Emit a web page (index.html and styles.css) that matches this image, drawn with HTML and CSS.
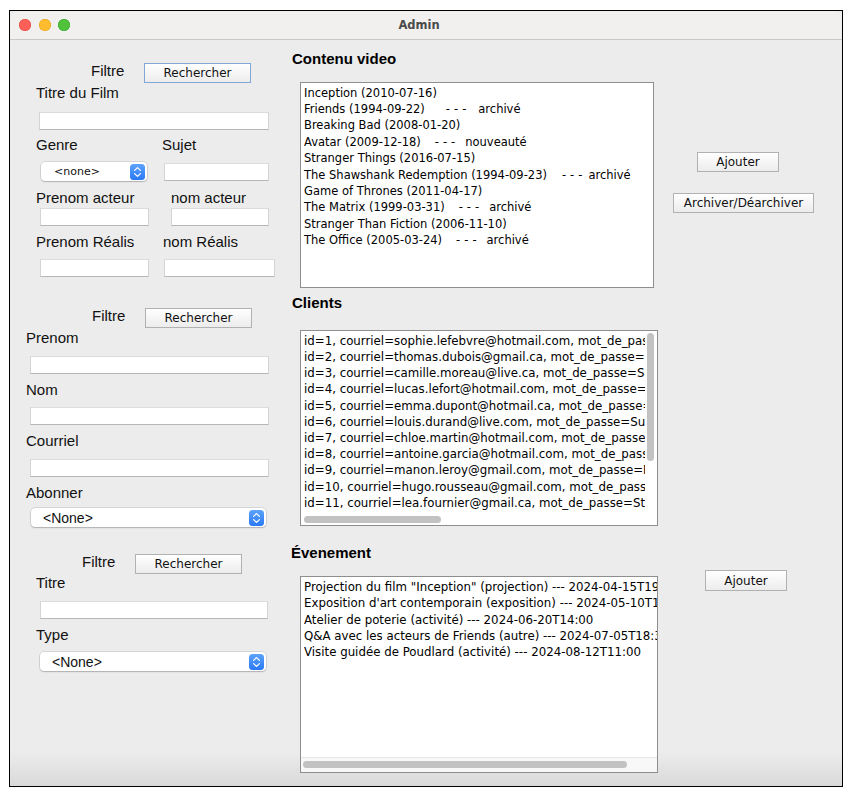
FILE: index.html
```html
<!DOCTYPE html>
<html lang="fr">
<head>
<meta charset="utf-8">
<title>Admin</title>
<link rel="stylesheet" href="styles.css">
</head>
<body>
<div class="frame">
  <div class="titlebar">
    <div class="lights">
      <span class="light red"></span>
      <span class="light yellow"></span>
      <span class="light green"></span>
    </div>
    <div class="title">Admin</div>
    <div></div>
  </div>
  <div class="content">
    <!-- LEFT COLUMN -->
    <div class="col-left">
      <!-- Panel 1 : films -->
      <div class="filter-row p1">
        <span class="filtre">Filtre</span>
        <button class="btn btn-focus btn-search">Rechercher</button>
      </div>
      <div class="label l1-titre">Titre du Film</div>
      <div class="field f1-titre"></div>
      <div class="row l1-gs">
        <span class="cell w126">Genre</span><span>Sujet</span>
      </div>
      <div class="row r1-gs">
        <div class="combo combo-small">
          <span>&lt;none&gt;</span>
          <svg class="stepper" width="15" height="16" viewBox="0 0 15 16"><defs><linearGradient id="g1" x1="0" y1="0" x2="0" y2="1"><stop offset="0" stop-color="#5ca3fb"/><stop offset="1" stop-color="#2b78f5"/></linearGradient></defs><rect x="0" y="0" width="15" height="16" rx="3.5" fill="url(#g1)"/><path d="M4.6 6.4 L7.5 3.6 L10.4 6.4" fill="none" stroke="#fff" stroke-width="1.3" stroke-linecap="round" stroke-linejoin="round"/><path d="M4.6 9.6 L7.5 12.4 L10.4 9.6" fill="none" stroke="#fff" stroke-width="1.3" stroke-linecap="round" stroke-linejoin="round"/></svg>
        </div>
        <div class="field f1-sujet"></div>
      </div>
      <div class="row l1-act">
        <span class="cell w135">Prenom acteur</span><span>nom acteur</span>
      </div>
      <div class="row r1-act">
        <div class="field f-109"></div>
        <div class="field f1-nomact"></div>
      </div>
      <div class="row l1-real">
        <span class="cell w127">Prenom Réalis</span><span>nom Réalis</span>
      </div>
      <div class="row r1-real">
        <div class="field f-109"></div>
        <div class="field f1-nomreal"></div>
      </div>

      <!-- Panel 2 : clients -->
      <div class="filter-row p2">
        <span class="filtre">Filtre</span>
        <button class="btn btn-search">Rechercher</button>
      </div>
      <div class="label l2 l2-first">Prenom</div>
      <div class="field f2 f2-a"></div>
      <div class="label l2 l2-next">Nom</div>
      <div class="field f2 f2-b"></div>
      <div class="label l2 l2-next">Courriel</div>
      <div class="field f2 f2-a"></div>
      <div class="label l2 l2-next">Abonner</div>
      <div class="combo combo-wide c2">
        <span>&lt;None&gt;</span>
        <svg class="stepper" width="15" height="16" viewBox="0 0 15 16"><defs><linearGradient id="g2" x1="0" y1="0" x2="0" y2="1"><stop offset="0" stop-color="#5ca3fb"/><stop offset="1" stop-color="#2b78f5"/></linearGradient></defs><rect x="0" y="0" width="15" height="16" rx="3.5" fill="url(#g2)"/><path d="M4.6 6.4 L7.5 3.6 L10.4 6.4" fill="none" stroke="#fff" stroke-width="1.3" stroke-linecap="round" stroke-linejoin="round"/><path d="M4.6 9.6 L7.5 12.4 L10.4 9.6" fill="none" stroke="#fff" stroke-width="1.3" stroke-linecap="round" stroke-linejoin="round"/></svg>
      </div>

      <!-- Panel 3 : evenements -->
      <div class="filter-row p3">
        <span class="filtre">Filtre</span>
        <button class="btn btn-search">Rechercher</button>
      </div>
      <div class="label l3-titre">Titre</div>
      <div class="field f3-titre"></div>
      <div class="label l3-type">Type</div>
      <div class="combo combo-wide c3">
        <span>&lt;None&gt;</span>
        <svg class="stepper" width="15" height="16" viewBox="0 0 15 16"><defs><linearGradient id="g3" x1="0" y1="0" x2="0" y2="1"><stop offset="0" stop-color="#5ca3fb"/><stop offset="1" stop-color="#2b78f5"/></linearGradient></defs><rect x="0" y="0" width="15" height="16" rx="3.5" fill="url(#g3)"/><path d="M4.6 6.4 L7.5 3.6 L10.4 6.4" fill="none" stroke="#fff" stroke-width="1.3" stroke-linecap="round" stroke-linejoin="round"/><path d="M4.6 9.6 L7.5 12.4 L10.4 9.6" fill="none" stroke="#fff" stroke-width="1.3" stroke-linecap="round" stroke-linejoin="round"/></svg>
      </div>
    </div>

    <!-- MIDDLE COLUMN -->
    <div class="col-mid">
      <h2 class="heading h-video">Contenu video</h2>
      <div class="listbox lb-video">
        <div class="list-inner">
          <div>Inception (2010-07-16)</div>
          <div>Friends (1994-09-22)<span class="sep sep-wide">---</span>archivé</div>
          <div>Breaking Bad (2008-01-20)</div>
          <div>Avatar (2009-12-18)<span class="sep">---</span>nouveauté</div>
          <div>Stranger Things (2016-07-15)</div>
          <div>The Shawshank Redemption (1994-09-23)<span class="sep sep-tight">---</span>archivé</div>
          <div>Game of Thrones (2011-04-17)</div>
          <div>The Matrix (1999-03-31)<span class="sep">---</span>archivé</div>
          <div>Stranger Than Fiction (2006-11-10)</div>
          <div>The Office (2005-03-24)<span class="sep">---</span>archivé</div>
        </div>
      </div>

      <h2 class="heading h-clients">Clients</h2>
      <div class="listbox lb-clients">
        <div class="list-inner clip">
          <div>id=1, courriel=sophie.lefebvre@hotmail.com, mot_de_passe=Password123</div>
          <div>id=2, courriel=thomas.dubois@gmail.ca, mot_de_passe=Pass456</div>
          <div>id=3, courriel=camille.moreau@live.ca, mot_de_passe=Secure789</div>
          <div>id=4, courriel=lucas.lefort@hotmail.com, mot_de_passe=P@ssw0rd</div>
          <div>id=5, courriel=emma.dupont@hotmail.ca, mot_de_passe=Strong1</div>
          <div>id=6, courriel=louis.durand@live.com, mot_de_passe=SuperPass</div>
          <div>id=7, courriel=chloe.martin@hotmail.com, mot_de_passe=Pass2024</div>
          <div>id=8, courriel=antoine.garcia@hotmail.com, mot_de_passe=Secret</div>
          <div>id=9, courriel=manon.leroy@gmail.com, mot_de_passe=P@ss99</div>
          <div>id=10, courriel=hugo.rousseau@gmail.com, mot_de_passe=Hugo10</div>
          <div>id=11, courriel=lea.fournier@gmail.ca, mot_de_passe=Strong11</div>
        </div>
        <div class="vbar"><div class="vthumb"></div></div>
        <div class="hbar"><div class="hthumb hthumb-clients"></div></div>
        <div class="corner"></div>
      </div>

      <h2 class="heading h-events">Évenement</h2>
      <div class="listbox lb-events">
        <div class="list-inner clip">
          <div>Projection du film "Inception" (projection) --- 2024-04-15T19:00</div>
          <div>Exposition d'art contemporain (exposition) --- 2024-05-10T10:00</div>
          <div>Atelier de poterie (activité) --- 2024-06-20T14:00</div>
          <div>Q&amp;A avec les acteurs de Friends (autre) --- 2024-07-05T18:30</div>
          <div>Visite guidée de Poudlard (activité) --- 2024-08-12T11:00</div>
        </div>
        <div class="hbar hbar-events"><div class="hthumb hthumb-events"></div></div>
      </div>
    </div>

    <!-- RIGHT COLUMN -->
    <div class="col-right">
      <button class="btn btn-add1">Ajouter</button>
      <button class="btn btn-archive">Archiver/Déarchiver</button>
      <button class="btn btn-add2">Ajouter</button>
    </div>
  </div>
</div>
</body>
</html>
```

FILE: styles.css
```css
* { box-sizing: border-box; }

html, body {
  margin: 0;
  padding: 0;
  background: #ffffff;
}

body {
  width: 852px;
  height: 793px;
  overflow: hidden;
  font-family: "Liberation Sans", Arial, sans-serif;
  color: #111;
}

.frame {
  margin: 10px 0 0 9px;
  width: 834px;
  height: 777px;
  border: 1px solid #000;
  background: #ececec;
  overflow: hidden;
  display: flex;
  flex-direction: column;
}

/* ---------- title bar ---------- */
.titlebar {
  height: 29px;
  flex: none;
  background: #f1f0ee;
  border-bottom: 1px solid #c9c9c9;
  border-radius: 9px 9px 0 0;
  display: grid;
  grid-template-columns: 1fr auto 1fr;
  align-items: center;
}

.lights {
  display: flex;
  gap: 7.5px;
  padding-left: 9px;
}

.light {
  width: 12px;
  height: 12px;
  border-radius: 50%;
  display: block;
}
.red { background: #fe5f57; box-shadow: inset 0 0 0 0.5px #e1453f; }
.yellow { background: #febc2e; box-shadow: inset 0 0 0 0.5px #de9f1a; }
.green { background: #4fc23a; box-shadow: inset 0 0 0 0.5px #2fa72a; }

.title {
  font-family: "DejaVu Sans", sans-serif;
  font-weight: bold;
  font-size: 11.5px;
  color: #4a4a4a;
  padding-right: 14px;
}

/* ---------- content ---------- */
.content {
  flex: 1;
  display: flex;
  background: linear-gradient(to bottom, #ececec 0, #ececec calc(100% - 34px), #d9d9d9 100%);
}

.col-left {
  width: 275px;
  flex: none;
}
.col-mid {
  width: 380px;
  flex: none;
}
.col-right {
  flex: 1;
  display: flex;
  flex-direction: column;
  align-items: flex-start;
}

/* labels */
.label, .row span {
  font-size: 15px;
  line-height: 18px;
  height: 18px;
  color: #111;
  white-space: nowrap;
}
.row { display: flex; }
.cell { display: block; flex: none; }
.w126 { width: 126px; }
.w135 { width: 135px; }
.w127 { width: 127px; }

/* filter rows */
.filter-row {
  display: flex;
  align-items: center;
  height: 20px;
}
.filtre {
  width: 53px;
  font-size: 15px;
  line-height: 18px;
  margin-bottom: 5px;
  flex: none;
}
.p1 { margin-top: 23px; padding-left: 81px; }
.p2 { margin-top: 31px; padding-left: 82px; }
.p3 { margin-top: 27px; padding-left: 72px; }

/* buttons */
.btn {
  display: block;
  height: 20px;
  padding: 0;
  margin: 0;
  border: 1px solid #b1b1b1;
  background: linear-gradient(to bottom, #ffffff, #ececec);
  font-family: "DejaVu Sans", sans-serif;
  font-size: 12px;
  color: #111;
  text-align: center;
  line-height: 18px;
}
.btn-focus { border-color: #7fa8d8; }
.btn-search { width: 107px; flex: none; }
.btn-add1 { margin: 112px 0 0 32px; width: 82px; }
.btn-archive { margin: 21px 0 0 8px; width: 141px; }
.btn-add2 { margin: 357px 0 0 40px; width: 82px; height: 21px; }

/* text fields */
.field {
  height: 18px;
  background: #fff;
  border: 1px solid #d4d4d4;
  border-top-color: #dcdcdc;
  border-bottom-color: #b7b7b7;
  flex: none;
}

/* panel 1 */
.l1-titre { margin: 1px 0 0 26px; }
.f1-titre { margin: 10px 0 0 29px; width: 230px; }
.l1-gs { margin-top: 6px; padding-left: 26px; }
.r1-gs { margin-top: 8px; padding-left: 31px; align-items: flex-start; height: 19px; }
.f1-sujet { margin: 1px 0 0 17px; width: 105px; }
.l1-act { margin-top: 8px; padding-left: 26px; }
.r1-act { margin-top: 1px; padding-left: 30px; }
.f-109 { width: 109px; }
.f1-nomact { margin-left: 22px; width: 98px; }
.l1-real { margin-top: 7px; padding-left: 26px; }
.r1-real { margin-top: 8px; padding-left: 30px; }
.f1-nomreal { margin-left: 15px; width: 111px; }

/* panel 2 */
.l2 { margin-left: 16px; }
.l2-first { margin-top: 1px; }
.l2-next { margin-top: 7px; }
.f2 { margin-left: 20px; width: 239px; }
.f2-a { margin-top: 9px; }
.f2-b { margin-top: 8px; }
.c2 { margin: 6px 0 0 21px; width: 235px; }

/* panel 3 */
.l3-titre { margin: 0 0 0 26px; }
.f3-titre { margin: 9px 0 0 30px; width: 228px; }
.l3-type { margin: 7px 0 0 26px; }
.c3 { margin: 8px 0 0 30px; width: 226px; }

/* combos */
.combo {
  height: 19px;
  background: #fff;
  border-radius: 4px;
  box-shadow: 0 0 0 0.5px rgba(0, 0, 0, 0.18), 0 1px 1.5px rgba(0, 0, 0, 0.18);
  display: flex;
  align-items: center;
  justify-content: space-between;
  padding: 0 2px 0 12px;
  flex: none;
}
.combo-small {
  width: 106px;
  padding-left: 13px;
}
.combo-small span {
  font-family: "DejaVu Sans", sans-serif;
  font-size: 11px;
  height: auto;
  line-height: 14px;
}
.combo-wide span {
  font-size: 14px;
  line-height: 16px;
  color: #111;
}
.stepper { display: block; flex: none; }

/* middle column */
.heading {
  margin: 0;
  font-family: "Liberation Sans", Arial, sans-serif;
  font-size: 15px;
  font-weight: bold;
  line-height: 18px;
  height: 18px;
  color: #000;
}
.h-video { margin: 10px 0 0 7px; }
.h-clients { margin: 6px 0 0 7px; }
.h-events { margin: 18px 0 0 6px; }

.listbox {
  margin-left: 15px;
  background: #fff;
  border: 1px solid #8e8e8e;
  font-family: "DejaVu Sans", sans-serif;
  font-size: 11.8px;
  color: #000;
}
.list-inner {
  padding: 1.5px 0 0 3px;
  line-height: 16.4px;
  white-space: nowrap;
  overflow: hidden;
}
.lb-video { margin-top: 14px; width: 354px; height: 206px; font-size: 11.5px; }
.sep {
  margin: 0 6px 0 14px;
  letter-spacing: 4px;
}
.sep-wide { margin: 0 8px 0 21px; }
.sep-tight { margin: 0 2px 0 15px; }

.lb-clients {
  margin-top: 18px;
  width: 358px;
  height: 196px;
  display: grid;
  grid-template-columns: 344px 12px;
  grid-template-rows: 182px 12px;
}
.lb-clients .list-inner { line-height: 16.2px; padding-top: 1.8px; }

.vbar { background: #fff; }
.vthumb {
  margin: 2px 0 0 2px;
  width: 7px;
  height: 128px;
  border-radius: 4px;
  background: #c2c2c2;
}
.hbar { background: #fff; }
.hthumb {
  height: 7px;
  border-radius: 4px;
  background: #c2c2c2;
}
.hthumb-clients { margin: 3px 0 0 3px; width: 137px; }
.corner { background: #fff; }

.lb-events {
  margin-top: 14px;
  width: 358px;
  height: 197px;
  display: grid;
  grid-template-rows: 180px 15px;
}
.lb-events .list-inner { padding-top: 2px; line-height: 16.3px; }
.hbar-events {
  background: #f8f8f8;
  border-top: 1px solid #e6e6e6;
}
.hthumb-events { margin: 3px 0 0 2px; width: 324px; }
```
